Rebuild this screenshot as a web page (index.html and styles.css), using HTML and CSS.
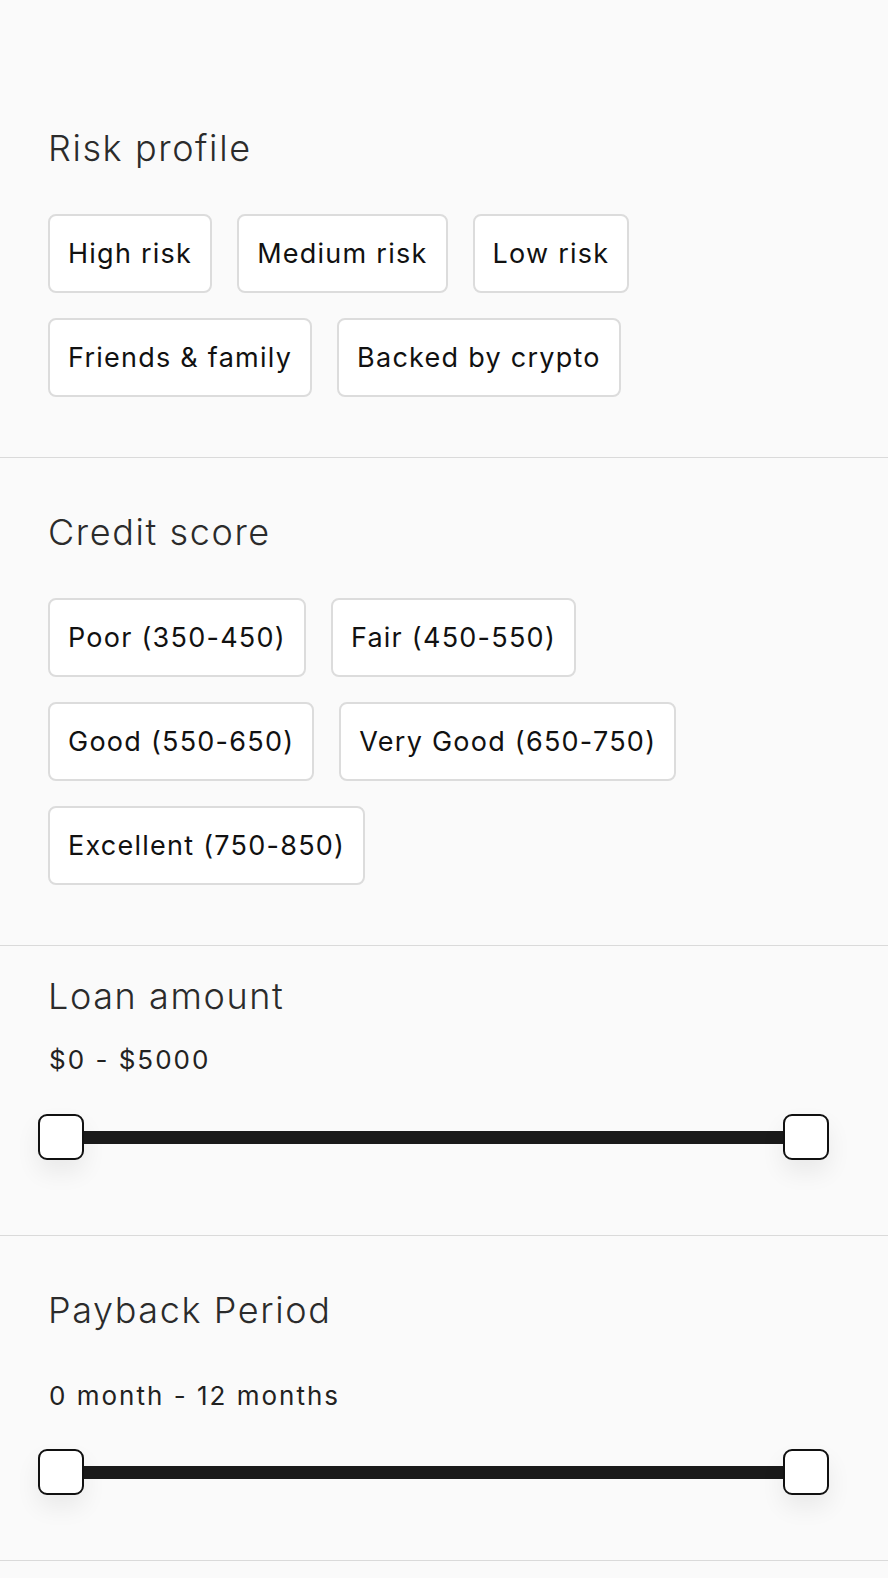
FILE: index.html
```html
<!DOCTYPE html>
<html>
  <head>
    <title>Filters</title>
    <link rel="stylesheet" href="styles.css">
  </head>
  <body>
    <div class="filters">
      <section class="group group-risk">
        <h2 class="groupTitle">Risk profile</h2>
        <div class="chips">
          <button class="chip">High risk</button>
          <button class="chip">Medium risk</button>
          <button class="chip">Low risk</button>
          <button class="chip">Friends &amp; family</button>
          <button class="chip">Backed by crypto</button>
        </div>
      </section>

      <section class="group group-credit">
        <h2 class="groupTitle">Credit score</h2>
        <div class="chips">
          <button class="chip">Poor (350-450)</button>
          <button class="chip">Fair (450-550)</button>
          <button class="chip">Good (550-650)</button>
          <button class="chip">Very Good (650-750)</button>
          <button class="chip">Excellent (750-850)</button>
        </div>
      </section>

      <section class="group group-amount">
        <h2 class="groupTitle">Loan amount</h2>
        <p class="rangeValue">$0 - $5000</p>
        <div class="slider">
          <span class="thumb"></span>
          <span class="track"></span>
          <span class="thumb"></span>
        </div>
      </section>

      <section class="group group-period">
        <h2 class="groupTitle">Payback Period</h2>
        <p class="rangeValue">0 month - 12 months</p>
        <div class="slider">
          <span class="thumb"></span>
          <span class="track"></span>
          <span class="thumb"></span>
        </div>
      </section>
    </div>
  </body>
</html>
```

FILE: styles.css
```css
body {
  margin: 0;
  background-color: #fafafa;
  font-family: Inter, "Open Sans", sans-serif;
  color: #111;
}

.group {
  padding: 0 48px;
  border-bottom: 1px solid #dadada;
}
.group-risk {
  padding-top: 126px;
  padding-bottom: 60px;
}
.group-credit {
  padding-top: 52px;
  padding-bottom: 60px;
}
.group-amount {
  padding-top: 28px;
  padding-bottom: 75px;
}
.group-period {
  padding-top: 52px;
  padding-bottom: 65px;
}

.groupTitle {
  margin: 0;
  font-size: 36px;
  line-height: 44px;
  font-weight: 300;
  letter-spacing: 1.6px;
  color: #2b2b2b;
}
.group-risk .groupTitle,
.group-credit .groupTitle {
  margin-bottom: 44px;
}

.chips {
  display: flex;
  flex-wrap: wrap;
  gap: 25px;
  max-width: 700px;
}
.chip {
  font-family: inherit;
  font-size: 27px;
  line-height: 35px;
  letter-spacing: 1.25px;
  color: #111;
  background-color: #fff;
  border: 2px solid #dcdcdc;
  border-radius: 8px;
  padding: 20px 18px;
}

.rangeValue {
  margin: 26px 0 38px 1px;
  font-size: 26px;
  line-height: 32px;
  letter-spacing: 2px;
  color: #222;
}
.group-period .rangeValue {
  margin-top: 48px;
  margin-bottom: 37px;
}

.slider {
  display: flex;
  align-items: center;
  width: 791px;
  margin-left: -10px;
}
.thumb {
  box-sizing: border-box;
  width: 46px;
  height: 46px;
  border: 2px solid #111;
  border-radius: 9px;
  background-color: #fff;
  box-shadow: 0 12px 24px rgba(0, 0, 0, 0.07);
}
.track {
  flex: 1;
  height: 13px;
  background-color: #1a1a1a;
}
```
